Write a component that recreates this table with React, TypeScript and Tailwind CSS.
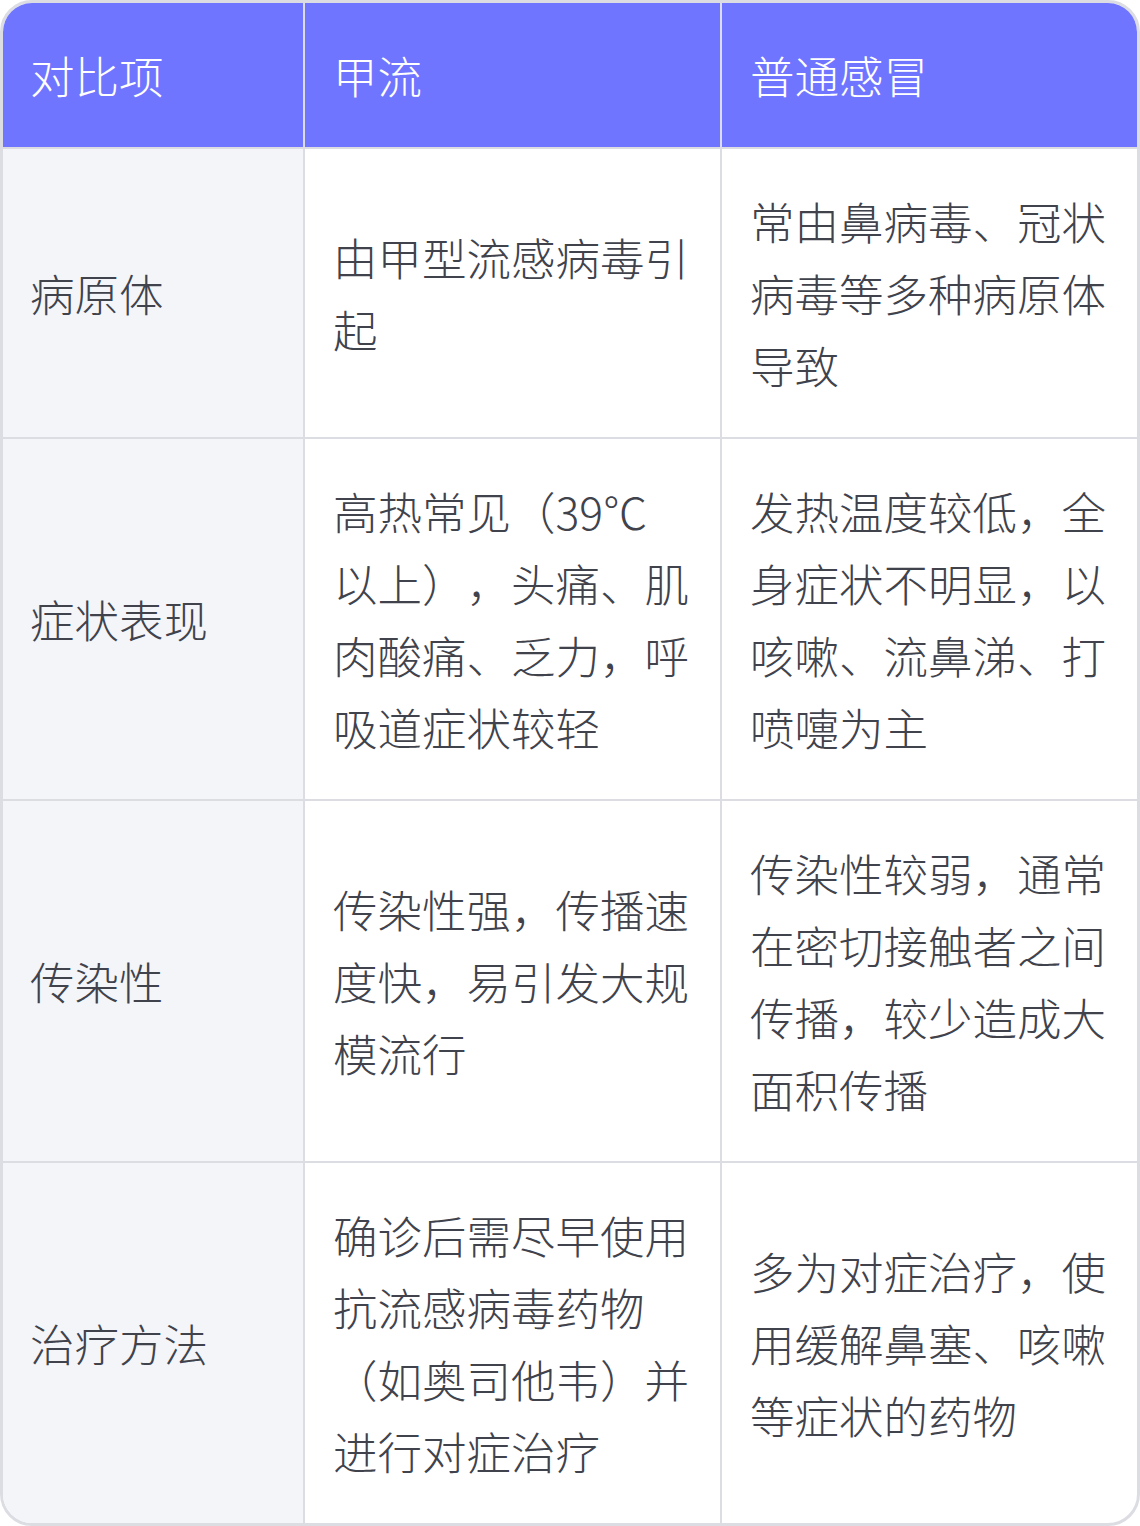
const rows = [
  {
    item: '病原体',
    flu: '由甲型流感病毒引起',
    cold: '常由鼻病毒、冠状病毒等多种病原体导致',
  },
  {
    item: '症状表现',
    flu: '高热常见（39℃以上），头痛、肌肉酸痛、乏力，呼吸道症状较轻',
    cold: '发热温度较低，全身症状不明显，以咳嗽、流鼻涕、打喷嚏为主',
  },
  {
    item: '传染性',
    flu: '传染性强，传播速度快，易引发大规模流行',
    cold: '传染性较弱，通常在密切接触者之间传播，较少造成大面积传播',
  },
  {
    item: '治疗方法',
    flu: '确诊后需尽早使用抗流感病毒药物（如奥司他韦）并进行对症治疗',
    cold: '多为对症治疗，使用缓解鼻塞、咳嗽等症状的药物',
  },
];

export default function App() {
  return (
    <div
      className="w-[1140px] h-[1526px] bg-white"
      style={{ fontFamily: '"Noto Sans CJK SC", "Noto Sans", sans-serif' }}
    >
      <div className="w-full h-full border-[3px] border-[#dcdde3] rounded-[32px] overflow-hidden">
        <div className="grid grid-cols-[302px_417px_415px] text-[44.5px] leading-[72px] font-light [text-spacing-trim:space-all]">
          {/* Header */}
          <div className="h-[146px] flex items-center bg-[#7075ff] text-white pl-[27px] border-r-2 border-b-2 border-[#dcdde3]">
            对比项
          </div>
          <div className="h-[146px] flex items-center bg-[#7075ff] text-white px-[28px] border-r-2 border-b-2 border-[#dcdde3]">
            甲流
          </div>
          <div className="h-[146px] flex items-center bg-[#7075ff] text-white px-[28px] border-b-2 border-[#dcdde3]">
            普通感冒
          </div>

          {rows.map((r, i) => {
            const last = i === rows.length - 1;
            return (
              <div key={r.item} className="contents text-[#40424c]">
                <div
                  className={`flex items-center bg-[#f4f5f9] pl-[27px] py-[36px] border-r-2 border-[#dcdde3] ${
                    last ? '' : 'border-b-2'
                  }`}
                >
                  {r.item}
                </div>
                <div
                  className={`flex items-center px-[28px] py-[36px] border-r-2 border-[#dcdde3] ${
                    last ? '' : 'border-b-2'
                  }`}
                >
                  <p>{r.flu}</p>
                </div>
                <div
                  className={`flex items-center px-[28px] py-[36px] border-[#dcdde3] ${
                    last ? '' : 'border-b-2'
                  }`}
                >
                  <p>{r.cold}</p>
                </div>
              </div>
            );
          })}
        </div>
      </div>
    </div>
  );
}
